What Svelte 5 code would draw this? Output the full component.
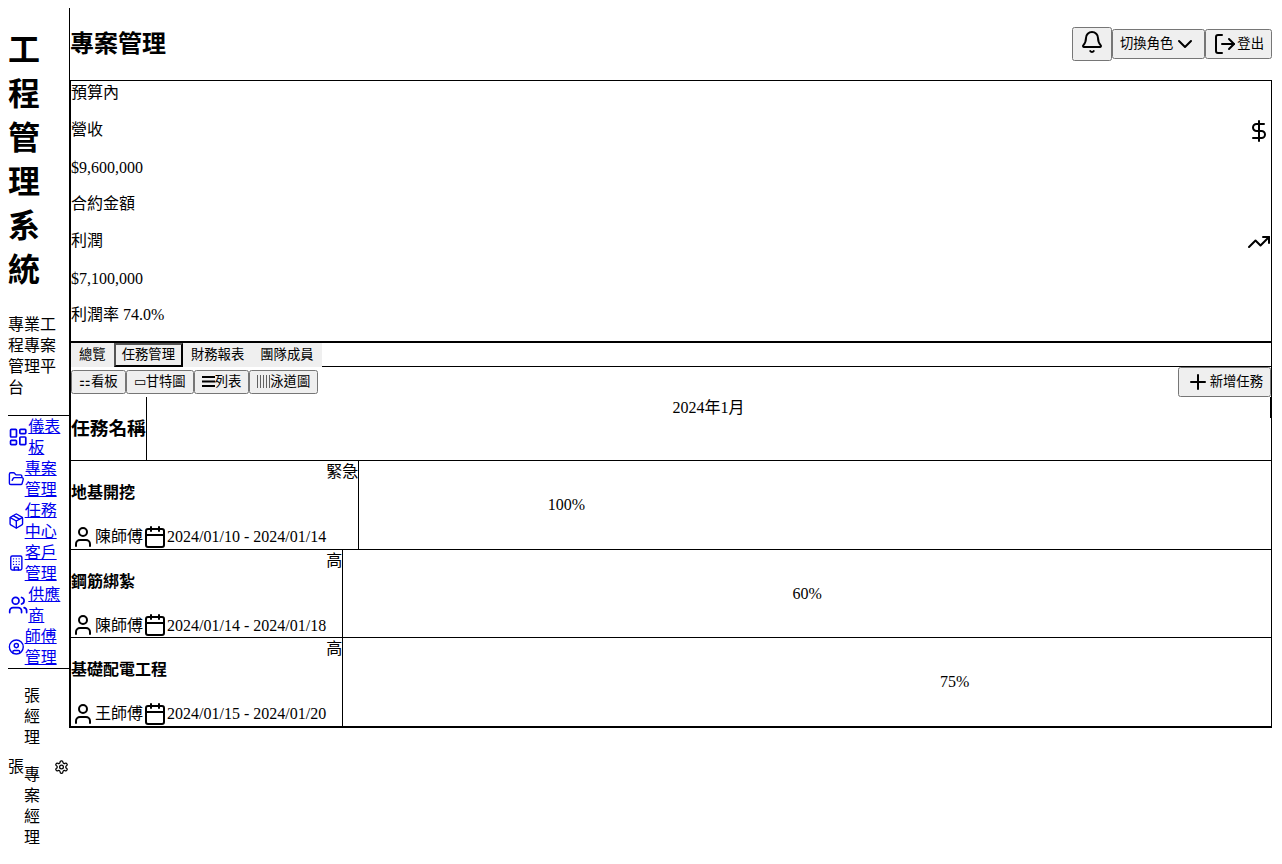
<script>
  const icons = {
    dashboard: '<rect width="7" height="9" x="3" y="3" rx="1"/><rect width="7" height="5" x="14" y="3" rx="1"/><rect width="7" height="9" x="14" y="12" rx="1"/><rect width="7" height="5" x="3" y="16" rx="1"/>',
    folder: '<path d="m6 14 1.5-2.9A2 2 0 0 1 9.24 10H20a2 2 0 0 1 1.94 2.5l-1.54 6a2 2 0 0 1-1.95 1.5H4a2 2 0 0 1-2-2V5a2 2 0 0 1 2-2h3.9a2 2 0 0 1 1.69.9l.81 1.2a2 2 0 0 0 1.67.9H18a2 2 0 0 1 2 2v2"/>',
    box: '<path d="M11 21.73a2 2 0 0 0 2 0l7-4A2 2 0 0 0 21 16V8a2 2 0 0 0-1-1.73l-7-4a2 2 0 0 0-2 0l-7 4A2 2 0 0 0 3 8v8a2 2 0 0 0 1 1.73z"/><path d="M12 22V12"/><path d="m3.3 7 8.7 5 8.7-5"/><path d="m7.5 4.27 9 5.15"/>',
    building: '<rect width="16" height="20" x="4" y="2" rx="2"/><path d="M9 22v-4h6v4"/><path d="M8 6h.01M16 6h.01M12 6h.01M12 10h.01M12 14h.01M16 10h.01M16 14h.01M8 10h.01M8 14h.01"/>',
    users: '<path d="M16 21v-2a4 4 0 0 0-4-4H6a4 4 0 0 0-4 4v2"/><circle cx="9" cy="7" r="4"/><path d="M22 21v-2a4 4 0 0 0-3-3.87"/><path d="M16 3.13a4 4 0 0 1 0 7.75"/>',
    account: '<circle cx="12" cy="12" r="10"/><circle cx="12" cy="10" r="3"/><path d="M7 20.66V19a2 2 0 0 1 2-2h6a2 2 0 0 1 2 2v1.66"/>',
    settings: '<path d="M12.22 2h-.44a2 2 0 0 0-2 2v.18a2 2 0 0 1-1 1.73l-.43.25a2 2 0 0 1-2 0l-.15-.08a2 2 0 0 0-2.73.73l-.22.38a2 2 0 0 0 .73 2.73l.15.1a2 2 0 0 1 1 1.72v.51a2 2 0 0 1-1 1.74l-.15.09a2 2 0 0 0-.73 2.73l.22.38a2 2 0 0 0 2.73.73l.15-.08a2 2 0 0 1 2 0l.43.25a2 2 0 0 1 1 1.73V20a2 2 0 0 0 2 2h.44a2 2 0 0 0 2-2v-.18a2 2 0 0 1 1-1.73l.43-.25a2 2 0 0 1 2 0l.15.08a2 2 0 0 0 2.73-.73l.22-.39a2 2 0 0 0-.73-2.73l-.15-.08a2 2 0 0 1-1-1.74v-.5a2 2 0 0 1 1-1.74l.15-.09a2 2 0 0 0 .73-2.73l-.22-.38a2 2 0 0 0-2.73-.73l-.15.08a2 2 0 0 1-2 0l-.43-.25a2 2 0 0 1-1-1.73V4a2 2 0 0 0-2-2z"/><circle cx="12" cy="12" r="3"/>',
    bell: '<path d="M10.268 21a2 2 0 0 0 3.464 0"/><path d="M3.262 15.326A1 1 0 0 0 4 17h16a1 1 0 0 0 .74-1.673C19.41 13.956 18 12.499 18 8A6 6 0 0 0 6 8c0 4.499-1.411 5.956-2.738 7.326"/>',
    chevron: '<path d="m6 9 6 6 6-6"/>',
    logout: '<path d="M9 21H5a2 2 0 0 1-2-2V5a2 2 0 0 1 2-2h4"/><path d="m16 17 5-5-5-5"/><path d="M21 12H9"/>',
    dollar: '<path d="M12 2v20"/><path d="M17 5H9.5a3.5 3.5 0 0 0 0 7h5a3.5 3.5 0 0 1 0 7H6"/>',
    trending: '<path d="m22 7-8.5 8.5-5-5L2 17"/><path d="M16 7h6v6"/>',
    plus: '<path d="M5 12h14"/><path d="M12 5v14"/>',
    user: '<path d="M19 21v-2a4 4 0 0 0-4-4H9a4 4 0 0 0-4 4v2"/><circle cx="12" cy="7" r="4"/>',
    calendar: '<path d="M8 2v4"/><path d="M16 2v4"/><rect width="18" height="18" x="3" y="4" rx="2"/><path d="M3 10h18"/>'
  };

  const nav = [
    { label: '儀表板', icon: 'dashboard' },
    { label: '專案管理', icon: 'folder' },
    { label: '任務中心', icon: 'box' },
    { label: '客戶管理', icon: 'building' },
    { label: '供應商', icon: 'users' },
    { label: '師傅管理', icon: 'account' }
  ];

  const stats = [
    { label: '營收', value: '$9,600,000', note: '合約金額', icon: 'dollar' },
    { label: '利潤', value: '$7,100,000', note: '利潤率 74.0%', icon: 'trending' }
  ];

  const tabs = ['總覽', '任務管理', '財務報表', '團隊成員'];
  let activeTab = $state('任務管理');

  const views = [
    { mark: '⚏', label: '看板' },
    { mark: '▭', label: '甘特圖' },
    { bars: 'M0 2h13M0 6.5h13M0 11h13', weight: 2, label: '列表' },
    { bars: 'M.5 0v13M3.5 0v13M6.5 0v13M9.500 0v13M12.5 0v13', weight: 0.6, label: '泳道圖' }
  ];

  const firstDay = 10;
  const totalDays = 11;
  const tasks = [
    { name: '地基開挖', priority: '緊急', worker: '陳師傅', start: 10, end: 14, progress: 100 },
    { name: '鋼筋綁紮', priority: '高', worker: '陳師傅', start: 14, end: 18, progress: 60 },
    { name: '基礎配電工程', priority: '高', worker: '王師傅', start: 15, end: 20, progress: 75 }
  ];

  const offset = (task) => ((task.start - firstDay) / totalDays) * 100;
  const span = (task) => ((task.end - task.start + 1) / totalDays) * 100;
</script>

{#snippet icon(name)}
  <svg class="icon" viewBox="0 0 24 24" width="24" height="24" aria-hidden="true">{@html icons[name]}</svg>
{/snippet}

<div class="app">
  <aside class="sidebar">
    <div class="brand">
      <h1>工程管理系統</h1>
      <p>專業工程專案管理平台</p>
    </div>
    <nav>
      {#each nav as item}
        <a href="#top">{@render icon(item.icon)}<span>{item.label}</span></a>
      {/each}
    </nav>
    <div class="profile">
      <span>張</span>
      <div class="who">
        <p>張經理</p>
        <p>專案經理</p>
      </div>
      <span class="gear">{@render icon('settings')}</span>
    </div>
  </aside>

  <div class="page">
    <header>
      <h2>專案管理</h2>
      <div class="actions">
        <button class="bell" aria-label="通知">{@render icon('bell')}</button>
        <button class="with-icon">切換角色{@render icon('chevron')}</button>
        <button class="with-icon">{@render icon('logout')}登出</button>
      </div>
    </header>

    <section class="stats">
      <p>預算內</p>
      {#each stats as stat}
        <div class="stat-head"><span>{stat.label}</span>{@render icon(stat.icon)}</div>
        <p class="value">{stat.value}</p>
        <p>{stat.note}</p>
      {/each}
    </section>

    <section class="board">
      <div class="tabs">
        {#each tabs as tab}
          <button class:active={tab === activeTab} onclick={() => (activeTab = tab)}>{tab}</button>
        {/each}
      </div>

      <div class="toolbar">
        <div class="views">
          {#each views as view}
            <button>
              {#if view.bars}<svg class="bars" viewBox="0 0 13 13" width="13" height="13" aria-hidden="true"><path d={view.bars} stroke-width={view.weight} /></svg>{:else}<span>{view.mark}</span>{/if}{view.label}
            </button>
          {/each}
        </div>
        <button class="with-icon">{@render icon('plus')}新增任務</button>
      </div>

      <div class="gantt-head">
        <h3>任務名稱</h3>
        <div class="month">2024年1月</div>
      </div>

      {#each tasks as task}
        <div class="task">
          <div class="info">
            <div>
              <h4>{task.name}</h4>
              <div class="meta">
                {@render icon('user')}<span>{task.worker}</span>
                {@render icon('calendar')}<span>2024/01/{task.start} - 2024/01/{task.end}</span>
              </div>
            </div>
            <span>{task.priority}</span>
          </div>
          <div class="track">
            <div class="bar" style="margin-left: {offset(task)}%; width: {span(task)}%">
              <div class="fill" style="width: {task.progress}%">{task.progress}%</div>
            </div>
          </div>
        </div>
      {/each}
    </section>
  </div>
</div>

<style>
  :global(body) {
    margin: 0;
    background: #fff;
    color: #000;
    font-family: "Liberation Serif", "Noto Sans CJK TC", serif;
    font-size: 16px;
    line-height: 21px;
  }

  .app {
    display: flex;
    align-items: flex-start;
    padding: 8px 10px 0 8px;
  }

  .icon {
    fill: none;
    stroke: currentColor;
    stroke-width: 2;
    stroke-linecap: round;
    stroke-linejoin: round;
  }

  p {
    margin: 16px 0;
  }

  .sidebar {
    flex: none;
    width: 61px;
  }

  .brand {
    display: flow-root;
    border-bottom: 1px solid #000;
  }

  h1 {
    margin: 20px 0 22px;
    font-size: 32px;
    line-height: 44px;
  }

  .brand p {
    margin-bottom: 17px;
  }

  nav {
    border-bottom: 1px solid #000;
  }

  nav a {
    display: flex;
    align-items: center;
    color: #0000ee;
  }

  .profile {
    display: flex;
    align-items: center;
  }

  .who {
    width: min-content;
  }

  .gear {
    display: flex;
    width: 15px;
    margin-left: auto;
  }

  .page {
    flex: 1;
    min-width: 0;
    border-left: 1px solid #000;
    border-bottom: 1px solid #000;
  }

  header {
    display: flex;
    align-items: center;
    justify-content: space-between;
  }

  h2 {
    margin: 20px 0;
    font-size: 24px;
    line-height: 32px;
  }

  .actions {
    display: flex;
    align-items: center;
  }

  button {
    font-family: "Liberation Sans", "Noto Sans CJK TC", sans-serif;
    line-height: 18px;
  }

  .bell {
    line-height: 16px;
  }

  .bars {
    fill: none;
    stroke: currentColor;
    vertical-align: -2px;
  }

  .with-icon {
    display: flex;
    align-items: center;
  }

  .stats {
    display: flex;
    flex-direction: column;
    gap: 16px;
    padding: 1px 0 16px;
    border: 1px solid #000;
  }

  .stats p {
    margin: 0;
  }

  .stats .value {
    line-height: 18px;
  }

  .stat-head {
    display: flex;
    align-items: flex-start;
    justify-content: space-between;
  }

  .board {
    border: 1px solid #000;
    border-bottom: 0;
  }

  .tabs {
    display: flex;
    border-bottom: 1px solid #000;
  }

  .tabs button {
    margin-bottom: -1px;
    border: 2px solid transparent;
  }

  .tabs .active {
    border: 2px outset #000;
  }

  .toolbar {
    display: flex;
    align-items: center;
    justify-content: space-between;
  }

  .views {
    display: flex;
  }

  .gantt-head {
    display: flex;
    align-items: flex-start;
    border-bottom: 1px solid #000;
  }

  h3 {
    margin: 0;
    padding: 19px 0;
    border-right: 1px solid #000;
    line-height: 25px;
  }

  .month {
    flex: 1;
    border-right: 1px solid #000;
    text-align: center;
  }

  .task {
    display: flex;
    border-bottom: 1px solid #000;
  }

  .info {
    display: flex;
    border-right: 1px solid #000;
  }

  .meta {
    display: flex;
    align-items: center;
  }

  .track {
    display: flex;
    flex: 1;
    align-items: center;
  }

  .fill {
    text-align: center;
  }
</style>
